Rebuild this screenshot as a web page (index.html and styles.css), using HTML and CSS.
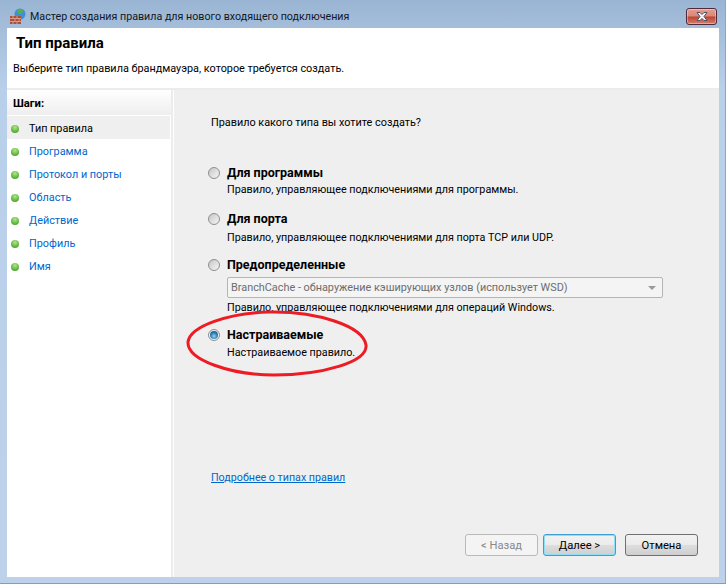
FILE: index.html
```html
<!DOCTYPE html>
<html lang="ru">
<head>
<meta charset="utf-8">
<title>Мастер создания правила</title>
<link rel="stylesheet" href="styles.css">
</head>
<body>
<div class="window">
  <div class="titlebar">
    <svg class="app-icon" width="17" height="17" viewBox="0 0 17 17">
      <circle cx="11" cy="6" r="5.5" fill="#3c8fd8"/>
      <path d="M8 2.500c2-2 5-2 6 0l-1 3-4 .5z" fill="#57b04a"/>
      <path d="M1 8h11v8H1z" fill="#a8503c"/>
      <path d="M1 10.5h11M1 13.5h11M4 8v2.500M8 8v2.500M6 10.500v3M10 10.500v3M4 13.500V16M8 13.500V16" stroke="#d89a88" stroke-width="1" fill="none"/>
    </svg>
    <span class="title-text">Мастер создания правила для нового входящего подключения</span>
    <div class="close-btn">
      <svg width="16" height="11" viewBox="0 0 16 11">
        <path d="M3 1.500h3l2 2 2-2h3l-3 4 3 4h-3l-2-2-2 2H3l3-4z" fill="#f4f4f8" stroke="#4a5468" stroke-width="1"/>
      </svg>
    </div>
  </div>
  <div class="client">
    <header class="head">
      <h1 class="head-title">Тип правила</h1>
      <p class="head-sub">Выберите тип правила брандмауэра, которое требуется создать.</p>
    </header>
    <div class="body-row">
      <nav class="steps">
        <div class="steps-head">Шаги:</div>
        <ul class="step-list">
          <li class="step step-active"><span class="dot"></span>Тип правила</li>
          <li class="step"><span class="dot"></span>Программа</li>
          <li class="step"><span class="dot"></span>Протокол и порты</li>
          <li class="step"><span class="dot"></span>Область</li>
          <li class="step"><span class="dot"></span>Действие</li>
          <li class="step"><span class="dot"></span>Профиль</li>
          <li class="step"><span class="dot"></span>Имя</li>
        </ul>
      </nav>
      <main class="pane">
        <p class="question">Правило какого типа вы хотите создать?</p>
        <div class="options">
          <div class="option">
            <span class="radio"></span>
            <div class="opt-body">
              <div class="opt-label">Для программы</div>
              <div class="opt-desc opt-desc-up">Правило, управляющее подключениями для программы.</div>
            </div>
          </div>
          <div class="option">
            <span class="radio"></span>
            <div class="opt-body">
              <div class="opt-label">Для порта</div>
              <div class="opt-desc opt-desc-down">Правило, управляющее подключениями для порта TCP или UDP.</div>
            </div>
          </div>
          <div class="option option-tight">
            <span class="radio"></span>
            <div class="opt-body">
              <div class="opt-label">Предопределенные</div>
              <div class="combo"><span>BranchCache - обнаружение кэширующих узлов (использует WSD)</span><i class="combo-arrow"></i></div>
              <div class="opt-desc">Правило, управляющее подключениями для операций Windows.</div>
            </div>
          </div>
          <div class="option">
            <span class="radio radio-on"></span>
            <div class="opt-body">
              <div class="opt-label">Настраиваемые</div>
              <div class="opt-desc">Настраиваемое правило.</div>
            </div>
          </div>
        </div>
        <a class="more" href="#">Подробнее о типах правил</a>
        <div class="buttons">
          <span class="btn btn-disabled">&lt; Назад</span>
          <span class="btn btn-default">Далее &gt;</span>
          <span class="btn btn-cancel">Отмена</span>
        </div>
      </main>
    </div>
  </div>
  <svg class="annotation" width="190" height="72" viewBox="0 0 190 72">
    <path d="M3 34C5 18 44 5 84 4c48-1 94 14 97 33 2 17-44 30-92 30C46 67 2 52 3 34z" fill="none" stroke="#ed1c24" stroke-width="3"/>
  </svg>
</div>
</body>
</html>
```

FILE: styles.css
```css
* { box-sizing: border-box; }
html, body { margin: 0; padding: 0; background: #fff; }
body {
  width: 726px;
  height: 584px;
  overflow: hidden;
  font-family: Roboto, "Open Sans", sans-serif;
  font-size: 10.85px;
  color: #000;
}
.window {
  position: relative;
  width: 726px;
  height: 584px;
  padding: 0 6px 6px 7px;
  background: linear-gradient(#9ab5d3 0, #b9d0ea 90px, #bdd2ea 100%);
  border-bottom: 1px solid #35bfdc;
  border-right: 1px solid #5fb7dc;
  display: flex;
  flex-direction: column;
}
.titlebar {
  height: 28px;
  flex: none;
  display: flex;
  align-items: center;
  padding: 5px 0 0 2px;
  position: relative;
}
.app-icon { flex: none; margin-right: 4px; margin-top: -1px; }
.title-text { font-size: 10.7px; color: #101828; }
.close-btn {
  position: absolute;
  right: 2px;
  top: 8px;
  width: 31px;
  height: 17px;
  border: 1px solid #4e2a3c;
  border-radius: 3px;
  background: linear-gradient(#e59c8f 0, #d98878 48%, #bb4330 52%, #d0806c 100%);
  box-shadow: inset 0 0 0 1px rgba(255,255,255,.35);
  display: flex;
  align-items: center;
  justify-content: center;
}
.client {
  flex: 1;
  display: flex;
  flex-direction: column;
  background: #fff;
}
.head {
  height: 62px;
  flex: none;
  background: #fff;
  border-bottom: 2px solid #ececec;
}
.head-title {
  margin: 0;
  padding: 6px 0 0 9px;
  font-size: 15px;
  line-height: 18px;
  font-weight: 700;
  color: #000;
}
.head-sub { margin: 0; padding: 9px 0 0 6px; line-height: 16px; }
.body-row { flex: 1; display: flex; min-height: 0; }
.steps {
  width: 166px;
  flex: none;
  background: #fff;
  border-right: 2px solid #ececec;
}
.steps-head {
  height: 25px;
  padding: 5px 0 0 6px;
  line-height: 18px;
  font-size: 11.3px;
  font-weight: 700;
  background: linear-gradient(#fff, #eeeeee);
}
.step-list { list-style: none; margin: 1px 0 0; padding: 0; }
.step {
  height: 23px;
  display: flex;
  align-items: center;
  padding: 2px 0 0 4px;
  color: #0066cc;
}
.step-active { background: #efefef; color: #000; margin-right: 1px; }
.dot {
  width: 8px;
  height: 8px;
  flex: none;
  margin-right: 10px;
  border-radius: 50%;
  background: radial-gradient(circle at 50% 30%, #b5e48c 0, #6cc04a 50%, #3f8f2d 100%);
}
.pane {
  flex: 1;
  margin-left: 1px;
  background: #efefef;
  padding: 25px 21px 21px 37px;
  display: flex;
  flex-direction: column;
}
.question { margin: 0; line-height: 16px; }
.options { margin-top: 34px; display: flex; flex-direction: column; gap: 11px; font-size: 10.75px; }
.option { display: flex; }
.option-tight { margin-bottom: -1px; }
.radio {
  width: 12px;
  height: 12px;
  flex: none;
  margin: 2px 7px 0 -3px;
  border: 1px solid #8e8f8f;
  border-radius: 50%;
  background: linear-gradient(135deg, #c6c6c6, #f6f6f6);
  position: relative;
}
.radio-on { background: #f4f4f4; }
.radio-on::after {
  content: "";
  position: absolute;
  left: 1px;
  top: 1px;
  width: 8px;
  height: 8px;
  border-radius: 50%;
  background: radial-gradient(circle at 50% 65%, #8fd6f5 0, #2a80b8 50%, #123a5c 100%);
}
.opt-body { flex: 1; min-width: 0; }
.opt-label { font-size: 12.5px; font-weight: 700; line-height: 15px; margin-bottom: 2px; color: #000; }
.opt-desc { line-height: 18px; }
.opt-desc-up { margin: -1px 0 1px; }
.opt-desc-down { margin: 3px 0 -1px; }
.combo {
  height: 21px;
  margin: 5px 35px 1px 0;
  border: 1px solid #b5b5b5;
  border-radius: 2px;
  background: #f4f4f4;
  display: flex;
  align-items: center;
  justify-content: space-between;
  padding: 0 6px 0 3px;
  font-size: 10.87px;
  color: #6d6d6d;
}
.combo-arrow {
  width: 0;
  height: 0;
  border-left: 4px solid transparent;
  border-right: 4px solid transparent;
  border-top: 4px solid #9a9a9a;
}
.more {
  margin-top: auto;
  margin-bottom: 48px;
  font-size: 10.7px;
  color: #0066cc;
  text-decoration: underline;
  line-height: 16px;
}
.buttons { display: flex; justify-content: flex-end; }
.btn {
  height: 22px;
  width: 73px;
  margin-left: 5px;
  display: flex;
  align-items: center;
  justify-content: center;
  font-size: 11.2px;
  border: 1px solid #707070;
  border-radius: 3px;
  background: linear-gradient(#f2f2f2 0, #ebebeb 48%, #dddddd 52%, #cfcfcf 100%);
}
.btn-disabled { border-color: #b9b9b9; background: #f4f4f4; color: #8a8a8a; }
.btn-default {
  border-color: #3c9fd0;
  box-shadow: inset 0 0 0 1px #8fe0f7;
}
.btn-cancel { margin-left: 9px; }
.annotation {
  position: absolute;
  left: 185px;
  top: 308px;
  pointer-events: none;
}
```
